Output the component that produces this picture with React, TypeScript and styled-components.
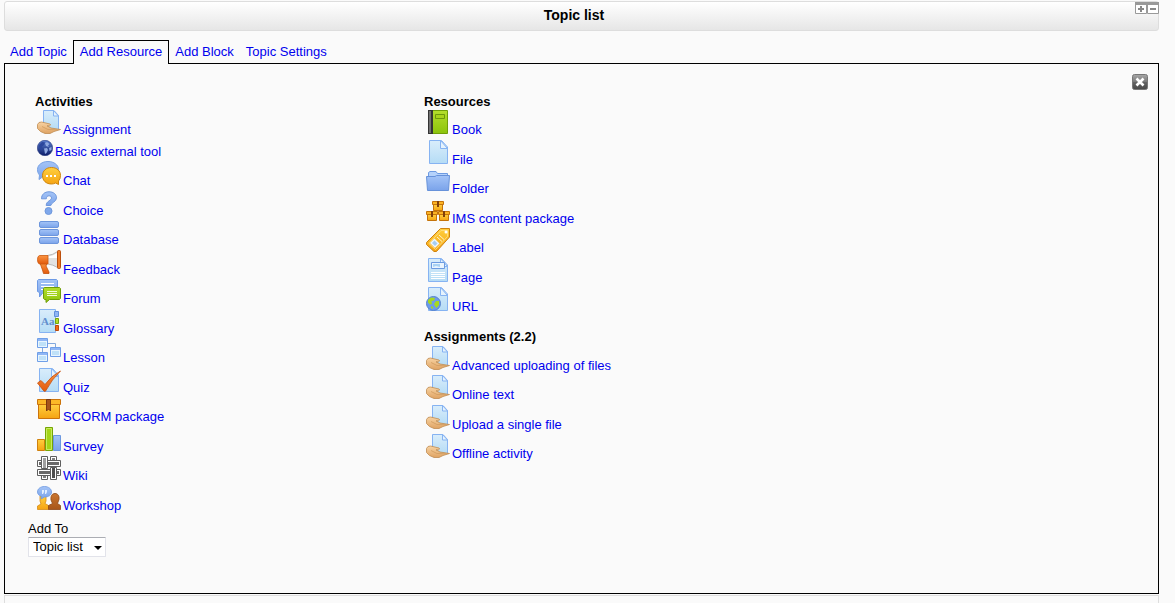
import React from "react";
import styled, { createGlobalStyle } from "styled-components";

const GlobalStyle = createGlobalStyle`
  *, *::before, *::after { box-sizing: border-box; }
  body {
    margin: 0;
    background: #fafafa;
    color: #000;
    font: 13px/15px "Liberation Sans", Arial, sans-serif;
  }
`;

const Page = styled.main`
  display: flex;
  flex-direction: column;
  min-height: 100vh;
  padding: 1px 16px 0 4px;
`;

const TitleBar = styled.header`
  display: flex;
  align-items: center;
  height: 30px;
  border: 1px solid #ddd;
  border-radius: 3px;
  background: linear-gradient(#ffffff, #e6e6e6);
`;

const Title = styled.h1`
  flex: 1;
  margin: 0;
  padding: 0 0 2px 8px;
  font-size: 14px;
  line-height: 16px;
  text-align: center;
`;

const BarButtons = styled.div`
  display: flex;
  align-self: flex-start;
  margin-right: -1px;
`;

const PlainButton = styled.button`
  display: block;
  padding: 0;
  border: 0;
  background: none;
  cursor: pointer;

  svg { display: block; }
`;

const CloseButton = styled(PlainButton)`
  position: absolute;
  top: 10px;
  right: 10px;
`;

const Tabs = styled.nav`
  display: flex;
  position: relative;
  z-index: 1;
  margin-top: 9px;
`;

const Tab = styled.a<{ $active?: boolean }>`
  height: 24px;
  margin-bottom: -1px;
  padding: ${(p) => (p.$active ? "3px 6px" : "4px 6px")};
  border: ${(p) => (p.$active ? "1px solid #000" : "0")};
  border-bottom: 0;
  background: ${(p) => (p.$active ? "#fafafa" : "none")};
  color: #0000ee;
  text-decoration: none;
`;

const Panel = styled.section`
  position: relative;
  padding: 30px 30px 36px 30px;
  border: 1px solid #000;
`;

const Columns = styled.div`
  display: grid;
  grid-template-columns: minmax(160px, 389px) 1fr;
`;

const GroupHeading = styled.h2`
  margin: 0 0 1px;
  font-size: 13px;
  line-height: 15px;

  ul + & { margin: 12px 0 2px; }
`;

const List = styled.ul<{ $wide?: "odd" | "even" }>`
  margin: 0;
  padding: 0 0 0 2px;
  list-style: none;

  li { padding-bottom: 2px; }
  li:nth-child(${(p) => p.$wide ?? "odd"}) { padding-bottom: 3px; }
`;

const ItemLink = styled.a`
  display: inline-flex;
  vertical-align: top;
  align-items: baseline;
  gap: 2px;
  color: #0000ee;
  text-decoration: none;
  white-space: nowrap;

  svg { flex: none; }
`;

const AddTo = styled.div`
  display: flex;
  flex-direction: column;
  align-items: flex-start;
  gap: 1px;
  margin: 6px 0 0 -7px;
`;

const SelectBox = styled.div`
  position: relative;

  svg {
    position: absolute;
    top: 9px;
    right: 4px;
    pointer-events: none;
  }
`;

const Select = styled.select`
  display: block;
  appearance: none;
  width: 78px;
  height: 20px;
  padding: 0 0 1px 4px;
  border: 1px solid #e2e3ea;
  border-top-color: #abadb3;
  border-radius: 1px;
  background: #fff;
  color: #000;
  font: inherit;
`;

const NextSection = styled.section`
  flex: 1;
  min-height: 8px;
  margin-top: 1px;
  border: 1px solid #ddd;
  border-bottom: 0;
`;

const HiddenDefs = styled.svg`
  position: absolute;
`;

const gradients: [string, string, string][] = [
  ["paper", "#d9edfb", "#b5dcf5"],
  ["blue", "#a4c4f7", "#7aa3ea"],
  ["orange", "#ffcf3f", "#f5a312"],
  ["green", "#b4de2c", "#8cc40c"],
  ["red", "#fb9442", "#e25a0c"],
  ["skin", "#f8d3a2", "#dfa363"],
  ["brown", "#c9752f", "#a8561a"],
  ["navy", "#5a7fd0", "#0c1c68"],
  ["steel", "#a8a8a8", "#484848"],
];

const Gradients = () => (
  <HiddenDefs width="0" height="0" aria-hidden="true">
    <defs>
      {gradients.map(([id, from, to]) => (
        <linearGradient key={id} id={id} x1="0" y1="0" x2="0" y2="1">
          <stop offset="0" stopColor={from} />
          <stop offset="1" stopColor={to} />
        </linearGradient>
      ))}
    </defs>
  </HiddenDefs>
);

const Sheet = ({ x = 2 }: { x?: number }) => (
  <g stroke="#86b3f2">
    <path d={`M${x + 0.5} .5H15.5L21.5 7V23.5H${x + 0.5}z`} fill="url(#paper)" />
    <path d="M14.5 .5V8.5H21.5z" fill="#e6f3fd" />
  </g>
);

const Crate = ({ x, y }: { x: number; y: number }) => (
  <g transform={`translate(${x} ${y})`}>
    <path d="M1.5 3.5H10.5V9.5H1.5z" fill="url(#orange)" stroke="#c4730a" />
    <path d="M.5 .5H11.5V3.5H.5z" fill="#fbb324" stroke="#c4730a" />
    <path d="M5 0H7V6H5z" fill="#81400b" />
  </g>
);

const LessonBox = ({ x, y }: { x: number; y: number }) => (
  <g transform={`translate(${x} ${y})`}>
    <path d="M.5 .5H10.5V9.5H.5z" fill="#e8f5fe" stroke="#6f9fe8" />
    <path d="M1 1H10V3H1z" fill="#8fb6f5" />
    <path d="M2 4H9V8H2z" fill="#bfe1f8" />
  </g>
);

const icons: Record<string, React.ReactNode> = {
  assignment: (
    <>
      <path d="M6.5 .5H17L21.5 5.5V19.5H6.5z" fill="url(#paper)" stroke="#86b3f2" />
      <path d="M16.5 .5V6H21.5z" fill="#e6f3fd" stroke="#86b3f2" />
      <path
        d="M.5 14.5L2 12.5L4.500 12L13 14Q14.500 15 12.500 15.800H10L14 18L23.500 19.500L17 21.500L13 23.500H8L3.500 21.500L.5 18.500z"
        fill="url(#skin)"
        stroke="#bf8c52"
        strokeWidth=".8"
        strokeLinejoin="round"
      />
      <path d="M5 16.500L11 19.500L20 19.800" fill="none" stroke="#cf9a5e" strokeWidth=".8" />
    </>
  ),
  tool: (
    <>
      <circle cx="8" cy="8" r="7.700" fill="url(#navy)" stroke="#26387e" strokeWidth=".6" />
      <path d="M2 5L5 2L8 2.500L7 5L5 6.500L6 9L4 10L2 8z" fill="#2c479c" />
      <path d="M8 3L10 2L12.500 4L11 5.500L12 7L9 6z M7 8.500L10 8L11 10L9.500 13L8 14L7.500 11z M12 8L14.500 7V10L12.500 11z" fill="#8fa8e0" />
    </>
  ),
  chat: (
    <>
      <path d="M11 .5C17 .5 21.500 4 21.500 8.500S17 17 11 17Q8 17 5.500 16L2 18.500L2.500 14C1 12.500 .5 10.500 .5 8.500C.5 4 5 .5 11 .5z" fill="url(#blue)" stroke="#7aa3e4" />
      <path d="M14.500 6.500C20 6.500 23.500 10 23.500 14.500Q23.500 18 21.500 20V23.500L18.500 22Q16.500 23 14.500 23C9 23 5.500 19.500 5.500 14.700S9 6.500 14.500 6.500z" fill="url(#orange)" stroke="#cf860d" />
      <path d="M9 14H11V16H9z M13 14H15V16H13z M17 14H19V16H17z" fill="#fff" />
    </>
  ),
  choice: (
    <>
      <path d="M4.500 7.800C4.500 3.500 7.500 .8 12 .8C16.500 .8 19.500 3.200 19.500 6.800C19.500 11 14 11.500 13.800 14.500H9.200C9.200 10 14.500 9.500 14.500 7C14.500 5.500 13.500 4.800 12 4.800C10.300 4.800 9.500 5.800 9.300 7.800z" fill="url(#blue)" stroke="#6f98dc" />
      <circle cx="11.500" cy="20" r="3.500" fill="#7fa8eb" stroke="#6f98dc" />
    </>
  ),
  database: (
    <g fill="url(#blue)" stroke="#6c95dc">
      <rect x="2.500" y="1.500" width="19" height="6" rx="1.500" />
      <rect x="2.500" y="9.500" width="19" height="6" rx="1.500" />
      <rect x="2.500" y="17.500" width="19" height="6" rx="1.500" />
    </g>
  ),
  feedback: (
    <>
      <path d="M3 13H10L9 16L12 22V23.500H6.500L5.500 20z" fill="url(#red)" stroke="#c2500b" strokeWidth=".8" />
      <path d="M10.500 5.500Q16 5 20.500 1.500V17.500Q16 14.500 10.500 14z" fill="#e2e2e2" stroke="#bbb" />
      <path d="M11 6.500Q16 6 20 3V8H11z" fill="#fff" />
      <path d="M2.500 5.500H11V14H2.500Q.5 13.500 .5 9.700T2.500 5.500z" fill="url(#red)" stroke="#cc590f" strokeWidth=".8" />
      <rect x="20.500" y=".5" width="3" height="18" rx="1" fill="#f27c25" stroke="#bb4e0d" />
    </>
  ),
  forum: (
    <>
      <path d="M1.500 .5H19.500L20.500 1.500V13.500H6L2.500 18V13.500L.5 12.500V1.500z" fill="url(#blue)" stroke="#6d9ae5" />
      <path d="M4 4.500H17M4 7.500H17M4 10.500H8" stroke="#fff" />
      <path d="M7.500 8.500H22.500L23.500 9.500V19.500L22.500 20.500H12.500L9 23.500V20.500H7.500L6.500 19.500V9.500z" fill="url(#green)" stroke="#6f9d08" />
      <path d="M10 12.500H20M10 14.500H20M10 16.500H20" stroke="#f4fbd9" />
    </>
  ),
  glossary: (
    <>
      <path d="M2.500 .5H18.500V23.500H2.500z" fill="url(#paper)" stroke="#86b3f2" />
      <path d="M17.500 2.500H21.500V7.500H17.500z" fill="#8fb6f5" stroke="#5f8fdc" />
      <path d="M18.500 9.500H21.500V14.500H18.500z" fill="#b4de2c" stroke="#75a30b" />
      <path d="M18.500 16.500H21.500V21.500H18.500z" fill="#f5691c" stroke="#bd4a0b" />
      <text x="4" y="16" fontFamily="Liberation Serif, serif" fontWeight="bold" fontSize="11" fill="#628fcd">Aa</text>
    </>
  ),
  lesson: (
    <>
      <path d="M11 5.500H18.500V9M5.500 10V14" fill="none" stroke="#83a9dd" />
      <LessonBox x={0} y={0} />
      <LessonBox x={13} y={9} />
      <LessonBox x={0} y={14} />
    </>
  ),
  quiz: (
    <>
      <Sheet />
      <path d="M.5 15L4 12.500L8 16.500Q14 8 23.500 3Q15 11 8.500 23.200H7z" fill="url(#red)" stroke="#c6500e" strokeWidth=".8" />
    </>
  ),
  scorm: (
    <>
      <path d="M1.500 7.500H22.500V21.500H1.500z" fill="url(#orange)" stroke="#cb730b" />
      <path d="M.5 2.500H23.500V7.500H.5z" fill="#fcb827" stroke="#cb730b" />
      <path d="M9.500 2.500H13.500V14L11.500 12L9.500 14z" fill="#a5541c" stroke="#7c390d" />
    </>
  ),
  survey: (
    <>
      <path d="M.5 12.500H7.500V23.500H.5z" fill="url(#orange)" stroke="#cf800e" />
      <path d="M16.500 8.500H23.500V23.500H16.500z" fill="url(#blue)" stroke="#6d98e0" />
      <path d="M8.500 .5H15.500V23.500H8.500z" fill="#a4d416" stroke="#76a505" />
      <path d="M9.500 1.500H14.500V22.500H9.500z" fill="none" stroke="#c8ea60" />
    </>
  ),
  wiki: (
    <g fill="#fff" stroke="#5e5e5e">
      <path d="M13.500 .5H19.500V10H13.500z M4.500 14H10.500V23.500H4.500z" />
      <path d="M15 2H18V9H15z M6 15H9V22H6z" fill="#808080" stroke="none" />
      <path d="M.5 4.500H23.500V10.500H.5z M.5 13.500H23.500V19.500H.5z" />
      <path d="M2 6H22V9H2z M2 15H22V18H2z" fill="#6a6a6a" stroke="none" />
      <path d="M4.500 .5H10.500V12.500H4.500z M13.500 11.500H19.500V23.500H13.500z" />
      <path d="M6 2H9V12H6z" fill="#a0a0a0" stroke="none" />
      <path d="M15 12H18V22H15z" fill="#4e4e4e" stroke="none" />
    </g>
  ),
  workshop: (
    <>
      <path d="M3 10H9V15L8 17.500L11.500 19.500V23.500H.5V20L4 18L3 15z" fill="url(#orange)" stroke="#d58b17" strokeWidth=".8" />
      <path d="M18 7.500C21 7.500 22.500 10 22 13.500L20.500 17.500L23.500 19.500V23.500H11.500V19.500L15.500 17.500L14 14C13.500 10 15 7.500 18 7.500z" fill="url(#brown)" stroke="#8e4817" strokeWidth=".8" />
      <path d="M7.500 .5C11.500 .5 14.500 2.800 14.500 6S11.500 11 7.500 11L4 13L4.500 10.500C2 9.500 .5 8 .5 6C.5 2.800 3.500 .5 7.500 .5z" fill="url(#blue)" stroke="#6d98e0" strokeWidth=".8" />
      <path d="M5 4H7V6L6 8H5z M8 4H10V6L9 8H8z" fill="#e2efff" />
    </>
  ),
  book: (
    <>
      <path d="M5.500 .5H21.500V23.500H5.500z" fill="url(#green)" stroke="#709e08" />
      <path d="M2 0H7V24H2z" fill="#343434" />
      <path d="M3 1H5V23H3z" fill="#717171" />
      <path d="M9.500 4.500H18.500V8.500H9.500z" fill="#a8d41b" stroke="#6d980a" />
    </>
  ),
  file: <Sheet x={3} />,
  folder: (
    <>
      <path d="M2.500 9V3.500L4 2.500H10L11.500 4.500H21.500V9z" fill="#b5d2fb" stroke="#6d9ae1" />
      <path d="M.5 7.500H9L10.500 6.500H23.500L22.500 21.500H1.500z" fill="url(#blue)" stroke="#6792da" />
    </>
  ),
  ims: (
    <>
      <Crate x={6} y={2} />
      <Crate x={0} y={12} />
      <Crate x={12} y={12} />
    </>
  ),
  label: (
    <>
      <path d="M14.500 .5H23.500V9L10.500 23.500H8L.5 16.500V14.500z" fill="url(#orange)" stroke="#cf830f" />
      <path d="M15 2.500H21.500V8.500L9.500 21.500L3 15.500z" fill="none" stroke="#ffdc7a" />
      <path d="M4 15L8.500 10.500L13.500 15.500L9 20z" fill="#eef6fd" />
      <path d="M6 15L8.500 12.500L11.500 15.500L9 18z" fill="#a5cdf0" />
      <path d="M11 9L16 13.500M13 7L18 11.500" stroke="#fff4c9" />
      <circle cx="20" cy="4" r="1.500" fill="#fff" />
    </>
  ),
  page: (
    <>
      <Sheet />
      <path d="M5.500 4.500H18.500V10.500H5.500z" fill="#eaf5fe" stroke="#6c9be0" />
      <path d="M7 6H14V9L10 8L7 9z" fill="#a9d3f4" />
      <path d="M5 14.500H19M5 16.500H19M5 18.500H19M5 20.500H19" stroke="#fff" />
    </>
  ),
  url: (
    <>
      <Sheet />
      <circle cx="7.500" cy="16.500" r="7" fill="#6d9bea" stroke="#5683ce" />
      <path d="M2 13L5 10.500L9 11L8 13.500L5.500 14L6 17L4 17.500L2 15.500z M10 14L13 14V18L10.500 21L9 19L8 17z M5 19L7 20V22L5 21z" fill="#a6d820" />
    </>
  ),
};

const Icon = ({ name, size = 24 }: { name: string; size?: number }) => (
  <svg width={size} height={size} viewBox={`0 0 ${size} ${size}`} aria-hidden="true">
    {icons[name]}
  </svg>
);

type Item = { icon: string; label: string; size?: number };

const activities: Item[] = [
  { icon: "assignment", label: "Assignment" },
  { icon: "tool", label: "Basic external tool", size: 16 },
  { icon: "chat", label: "Chat" },
  { icon: "choice", label: "Choice" },
  { icon: "database", label: "Database" },
  { icon: "feedback", label: "Feedback" },
  { icon: "forum", label: "Forum" },
  { icon: "glossary", label: "Glossary" },
  { icon: "lesson", label: "Lesson" },
  { icon: "quiz", label: "Quiz" },
  { icon: "scorm", label: "SCORM package" },
  { icon: "survey", label: "Survey" },
  { icon: "wiki", label: "Wiki" },
  { icon: "workshop", label: "Workshop" },
];

const resources: Item[] = [
  { icon: "book", label: "Book" },
  { icon: "file", label: "File" },
  { icon: "folder", label: "Folder" },
  { icon: "ims", label: "IMS content package" },
  { icon: "label", label: "Label" },
  { icon: "page", label: "Page" },
  { icon: "url", label: "URL" },
];

const assignments: Item[] = [
  "Advanced uploading of files",
  "Online text",
  "Upload a single file",
  "Offline activity",
].map((label) => ({ icon: "assignment", label }));

const Group = ({ title, items, wide }: { title: string; items: Item[]; wide?: "odd" | "even" }) => (
  <>
    <GroupHeading>{title}</GroupHeading>
    <List $wide={wide}>
      {items.map((item) => (
        <li key={item.label}>
          <ItemLink href="#">
            <Icon name={item.icon} size={item.size} />
            <span>{item.label}</span>
          </ItemLink>
        </li>
      ))}
    </List>
  </>
);

const BarIcon = ({ plus }: { plus?: boolean }) => (
  <svg width="12" height="12" viewBox="0 0 12 12" aria-hidden="true">
    <path d="M.5 .5H11.5V11.5H.5z" fill="#fff" stroke="#999" />
    <path d="M0 0H12V3H0z" fill="#999" />
    <path d={plus ? "M3 6H9V8H3z M5 4H7V10H5z" : "M3 6H9V8H3z"} fill="#888" />
  </svg>
);

const AddResourcePanel = () => (
  <Panel>
    <CloseButton aria-label="Close">
      <svg width="16" height="16" viewBox="0 0 16 16" aria-hidden="true">
        <rect x=".5" y=".5" width="15" height="15" rx="2" fill="url(#steel)" stroke="#777" />
        <path d="M1 8H15V13Q15 15 13 15H3Q1 15 1 13z" fill="#484848" opacity=".4" />
        <path d="M4.500 4.500L11.500 11.500M11.500 4.500L4.500 11.500" stroke="#fff" strokeWidth="2.600" />
      </svg>
    </CloseButton>
    <Columns>
      <div>
        <Group title="Activities" items={activities} />
      </div>
      <div>
        <Group title="Resources" items={resources} />
        <Group title="Assignments (2.2)" items={assignments} wide="even" />
      </div>
    </Columns>
    <AddTo>
      <label htmlFor="add-to">Add To</label>
      <SelectBox>
        <Select id="add-to" defaultValue="list">
          <option value="list">Topic list</option>
        </Select>
        <svg width="8" height="4" viewBox="0 0 8 4" aria-hidden="true">
          <path d="M0 0H8L4 4z" fill="#000" />
        </svg>
      </SelectBox>
    </AddTo>
  </Panel>
);

export default function App() {
  return (
    <>
      <GlobalStyle />
      <Gradients />
      <Page>
        <TitleBar>
          <Title>Topic list</Title>
          <BarButtons>
            <PlainButton aria-label="Expand"><BarIcon plus /></PlainButton>
            <PlainButton aria-label="Collapse"><BarIcon /></PlainButton>
          </BarButtons>
        </TitleBar>
        <Tabs>
          <Tab href="#">Add Topic</Tab>
          <Tab href="#" $active>Add Resource</Tab>
          <Tab href="#">Add Block</Tab>
          <Tab href="#">Topic Settings</Tab>
        </Tabs>
        <AddResourcePanel />
        <NextSection />
      </Page>
    </>
  );
}
